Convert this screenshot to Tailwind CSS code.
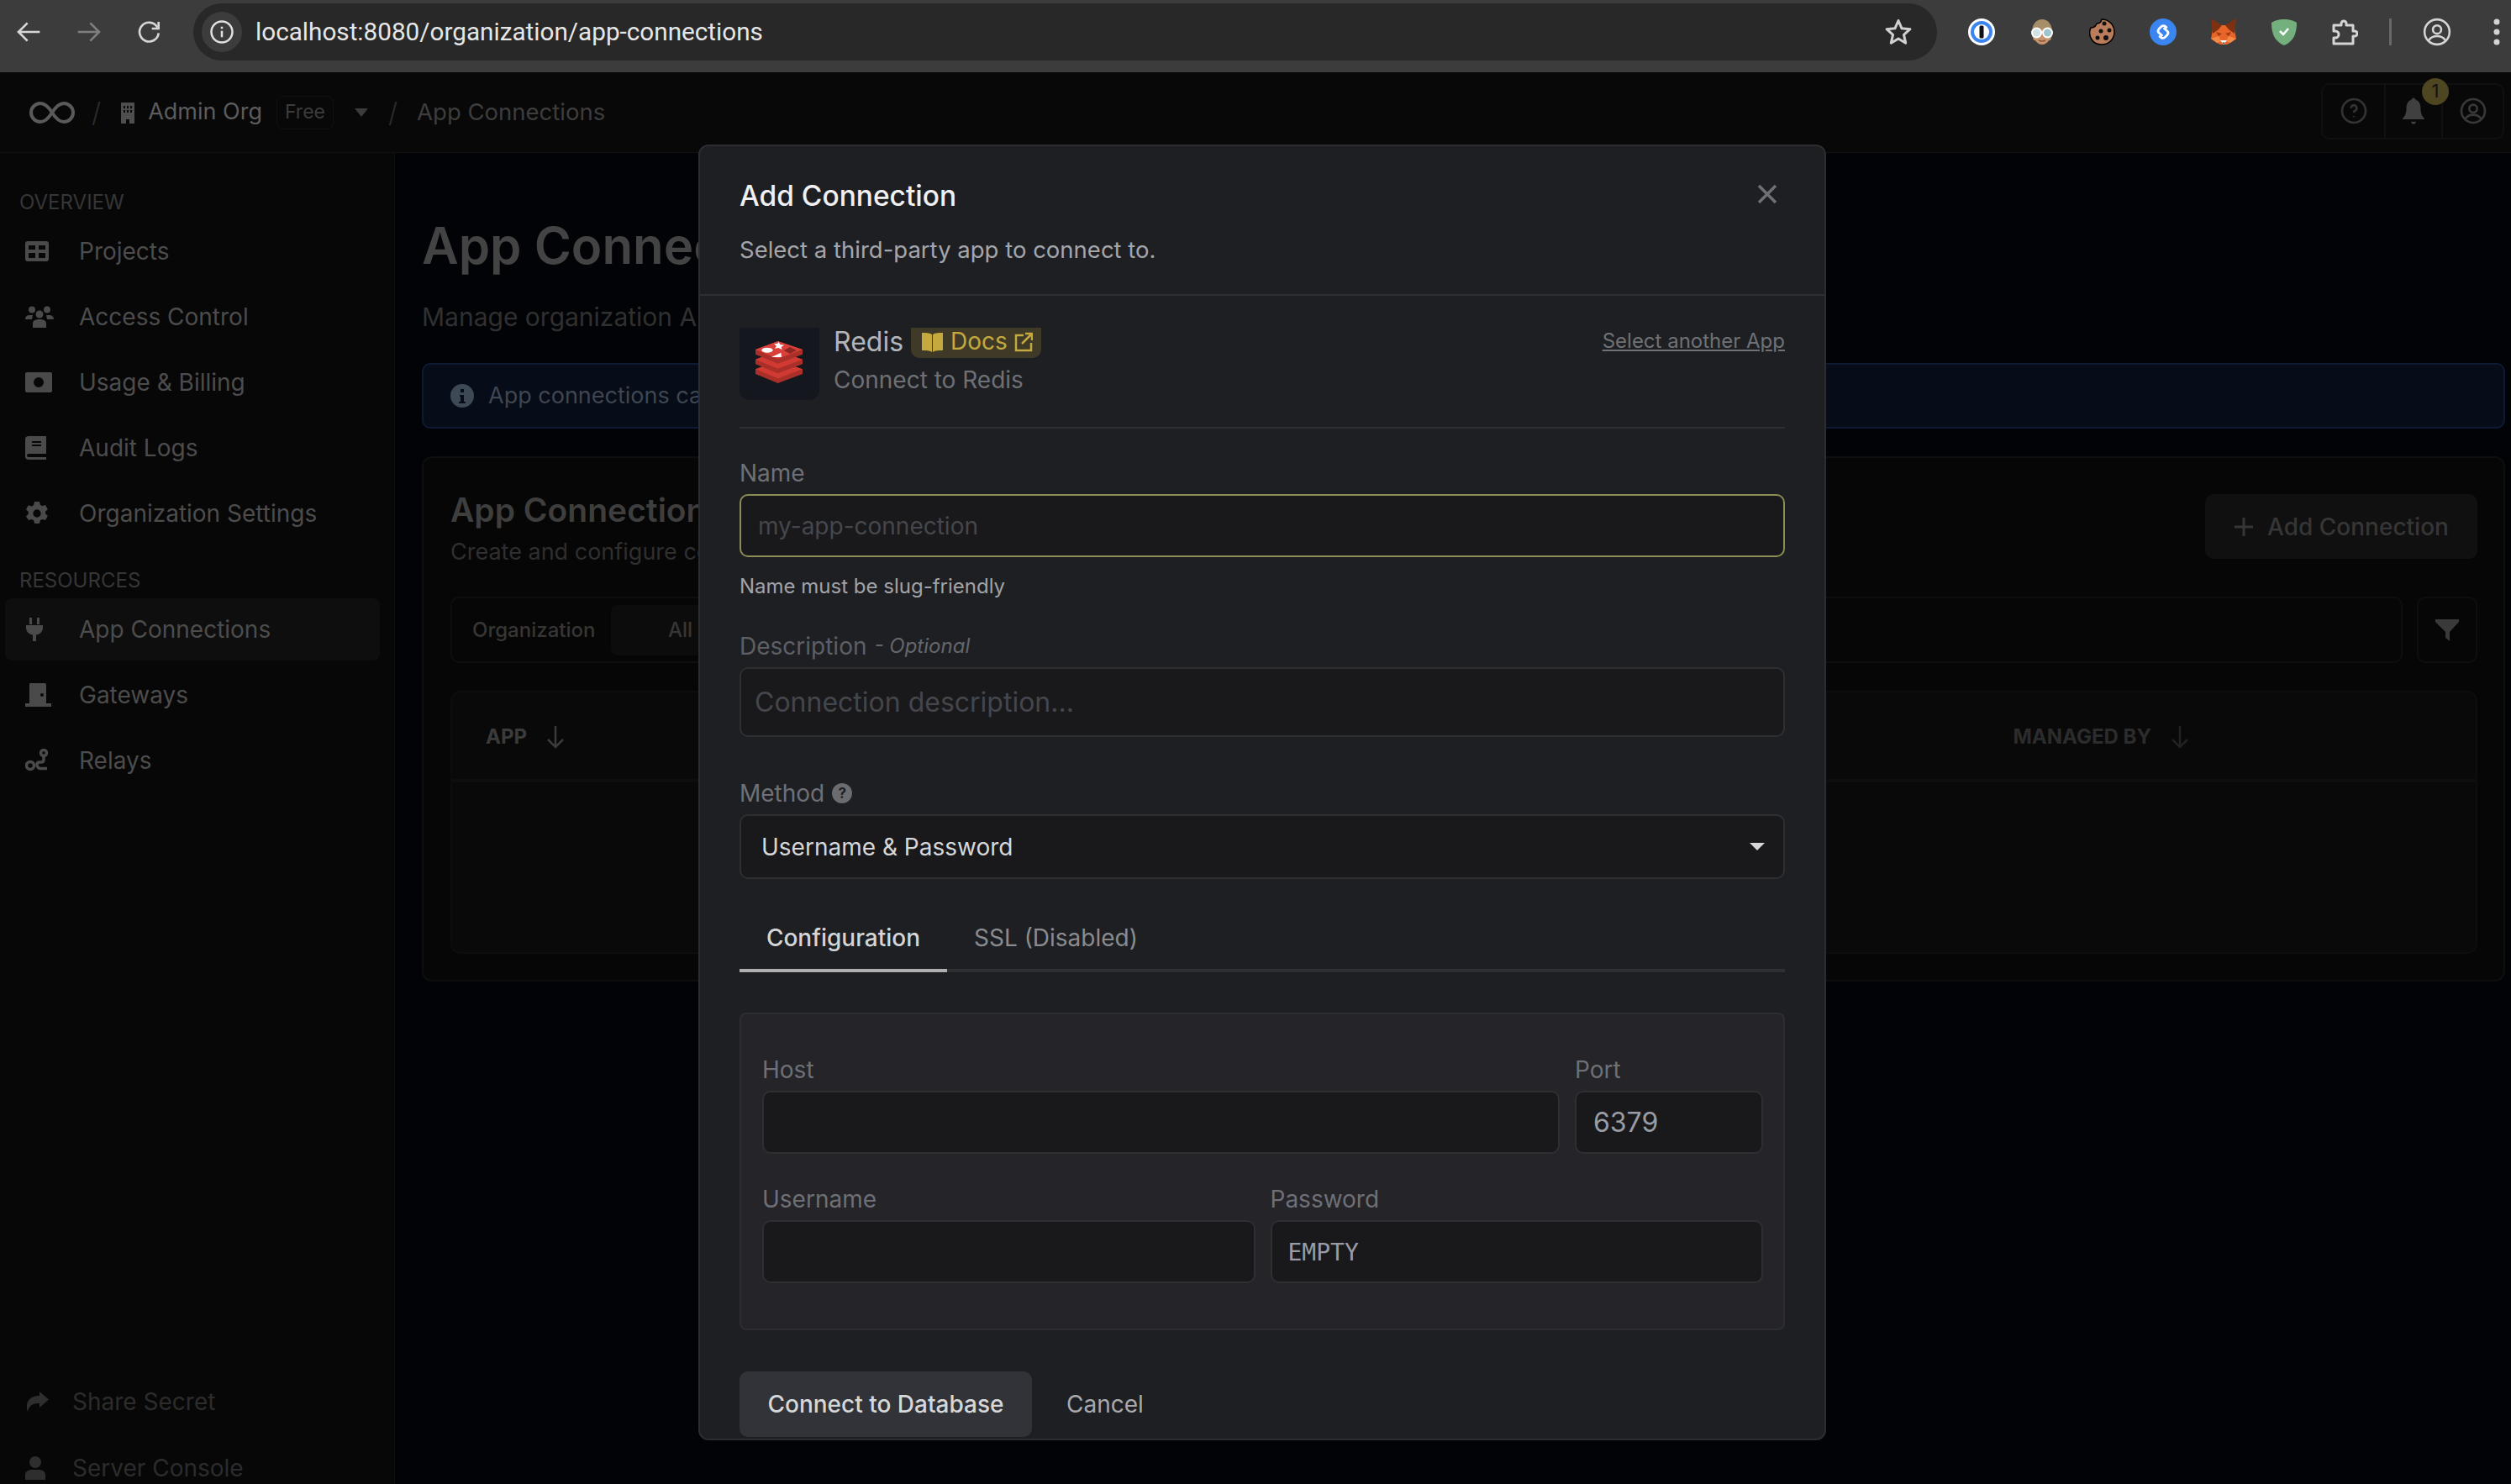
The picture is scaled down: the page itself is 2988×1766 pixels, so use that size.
<!DOCTYPE html>
<html lang="en">
<head>
  <meta charset="UTF-8">
  <title>App Connections</title>
  <script src="https://cdn.jsdelivr.net/npm/@tailwindcss/browser@4"></script>
</head>
<body class="bg-[#020306] [font-family:Inter,sans-serif]">
<div class="relative w-[2988px] h-[1766px] overflow-hidden flex flex-col">

  <!-- browser toolbar -->
  <div class="h-[86px] shrink-0 bg-[#3c3c3c] flex items-center pb-[10px]">
    <div class="w-[230px] shrink-0 flex items-center pl-[18px] gap-[40px]">
      <svg class="w-[32px] h-[32px]" viewBox="0 0 24 24" fill="none" stroke="#d6d6d6" stroke-width="2"><path d="M22 12H3M11 4l-8 8 8 8"/></svg>
      <svg class="w-[32px] h-[32px]" viewBox="0 0 24 24" fill="none" stroke="#7f7f7f" stroke-width="2"><path d="M2 12h19M13 4l8 8-8 8"/></svg>
      <svg class="w-[32px] h-[32px]" viewBox="0 0 24 24" fill="none" stroke="#d6d6d6" stroke-width="2"><path d="M19 8a8.5 8.5 0 1 0 1 5"/><path d="M20 3v6h-6" /></svg>
    </div>
    <div class="w-[2075px] h-[68px] rounded-[34px] bg-[#282828] flex items-center pl-[10px] pr-[28px]">
      <div class="w-[48px] h-[48px] rounded-full bg-[#3c3c3c] flex items-center justify-center">
        <svg class="w-[30px] h-[30px]" viewBox="0 0 24 24" fill="none" stroke="#e0e0e0" stroke-width="2"><circle cx="12" cy="12" r="10"/><path d="M12 11v6M12 7v2"/></svg>
      </div>
      <span class="ml-[16px] text-[29.7px] text-[#e6e6e6] [font-family:Roboto,sans-serif]">localhost:8080/organization/app-connections</span>
      <svg class="ml-auto w-[36px] h-[36px]" viewBox="0 0 24 24" fill="none" stroke="#d0d0d0" stroke-width="2" stroke-linejoin="round"><path d="M12 3l2.7 6.2 6.6.6-5 4.4 1.5 6.6L12 17.3l-5.8 3.5 1.5-6.6-5-4.4 6.6-.6z"/></svg>
    </div>
    <div class="flex-1 flex items-center pl-[37px] gap-[40px]">
      <!-- 1password -->
      <svg class="w-[32px] h-[32px] shrink-0" viewBox="0 0 32 32"><circle cx="16" cy="16" r="16" fill="#fff"/><circle cx="16" cy="16" r="13" fill="#3b85f0"/><circle cx="16" cy="16" r="9" fill="#fff"/><rect x="13.5" y="8.5" width="5" height="15" rx="1.5" fill="#111"/></svg>
      <!-- avatar -->
      <svg class="w-[32px] h-[32px] shrink-0" viewBox="0 0 32 32"><path d="M4 20C3 7 9 1 16 1s13 6 12 19l-2 6H6z" fill="#a68f68"/><path d="M7 13q9 1 18-3v15q-4 6-9 6t-9-6z" fill="#c8946e"/><circle cx="9.500" cy="17" r="5.500" fill="#cfe3e6" stroke="#fff" stroke-width="2"/><circle cx="22.500" cy="17" r="5.500" fill="#9fc5cc" stroke="#fff" stroke-width="2"/><path d="M12 26q4 2 8 0" stroke="#8c5a3c" stroke-width="1.500" fill="none"/></svg>
      <!-- cookie -->
      <svg class="w-[32px] h-[32px] shrink-0" viewBox="0 0 32 32"><path d="M15 1c-1 4-3 5-6 5-1 3-3 5-7 5-2 4-2 9 1 14 3 5 8 6 12 6 9 0 15-7 15-15S24 1 15 1z" fill="#b97d5c" stroke="#000" stroke-width="1.500"/><circle cx="18" cy="6" r="2.500" fill="#111"/><circle cx="24" cy="14" r="2.500" fill="#111"/><circle cx="14" cy="15" r="2.500" fill="#111"/><circle cx="10" cy="23" r="2.500" fill="#111"/><circle cx="20" cy="23" r="3" fill="#111"/></svg>
      <!-- shazam -->
      <svg class="w-[32px] h-[32px] shrink-0" viewBox="0 0 32 32"><circle cx="16" cy="16" r="16" fill="#3b85f0"/><path d="M20 10.500L18 9Q16 8 14 9.500L11 12.500Q9 15 11 17L14.500 20M12 21.500L14 23Q16 24 18 22.500L21 19.500Q23 17 21 15L17.500 12" fill="none" stroke="#fff" stroke-width="2.800" stroke-linecap="round"/></svg>
      <!-- fox -->
      <svg class="w-[32px] h-[32px] shrink-0" viewBox="0 0 32 32"><path d="M3 13L9 8H23L29 13L31 24L24 29L20 31H12L8 29L1 24Z" fill="#e8652a"/><path d="M1 0L14 8L10 13L3 18ZM31 0L18 8L22 13L29 18Z" fill="#7f3010"/><path d="M7 16L14 18L10 21ZM25 16L18 18L22 21Z" fill="#9c3d14"/><path d="M1 24L10 21L13 27L8 29ZM31 24L22 21L19 27L24 29Z" fill="#f28a45"/><path d="M12 26H20L16 31Z" fill="#fff"/><path d="M14.500 28.500H17.500L16 30.500Z" fill="#222"/></svg>
      <!-- adguard -->
      <svg class="w-[32px] h-[32px] shrink-0" viewBox="0 0 32 32"><path d="M16 1C9 1 4 3 1 5c0 12 3 22 15 27C28 27 31 17 31 5 28 3 23 1 16 1z" fill="#74b07e"/><path d="M11 15l4 4 6-7" fill="none" stroke="#fff" stroke-width="2.500"/></svg>
      <!-- puzzle -->
      <svg class="w-[32px] h-[32px] shrink-0" viewBox="0 0 32 32" fill="none" stroke="#d4d4d4" stroke-width="3" stroke-linejoin="round"><path d="M3 8h9V6a3 3 0 0 1 6 0v2h8v7h2a3 3 0 0 1 0 6h-2v9H3v-7h2a4 4 0 0 0 0-8H3z"/></svg>
      <div class="w-[3px] h-[32px] bg-[#686868] -ml-[3px]"></div>
      <svg class="w-[34px] h-[34px] shrink-0 ml-[-3px]" viewBox="0 0 24 24" fill="none" stroke="#d4d4d4" stroke-width="1.800"><circle cx="12" cy="12" r="10.500"/><circle cx="12" cy="10" r="3.500"/><path d="M5 19c2-3 5-3.500 7-3.500s5 .5 7 3.500"/></svg>
      <svg class="w-[8px] h-[32px] shrink-0 ml-[10px]" viewBox="0 0 8 32" fill="#d4d4d4"><circle cx="4" cy="4" r="3.500"/><circle cx="4" cy="16" r="3.500"/><circle cx="4" cy="28" r="3.500"/></svg>
    </div>
  </div>

  <!-- app header -->
  <header class="h-[96px] shrink-0 bg-[#080808] border-b border-[#101010] flex items-center pl-[35px] pr-[8px]">
    <svg class="w-[54px] h-[26px]" viewBox="0 0 54 26" fill="none" stroke="#5a5a5a" stroke-width="4"><path d="M27 13C22 5 18 2 13 2a11 11 0 0 0 0 22c5 0 9-3 14-11s9-11 14-11a11 11 0 0 1 0 22c-5 0-9-3-14-11z"/></svg>
    <span class="ml-[20px] text-[32px] text-[#2c2c2c] font-light">/</span>
    <svg class="ml-[23px] w-[18px] h-[26px]" viewBox="0 0 18 26" fill="#4e4e4e"><path d="M1 1h16v25h-6v-5H7v5H1z"/><path d="M4 5h2v3H4zM8 5h2v3H8zM12 5h2v3h-2zM4 10h2v3H4zM8 10h2v3H8zM12 10h2v3h-2z" fill="#0a0a0a"/></svg>
    <span class="ml-[15px] text-[27px] text-[#5c5c5c]">Admin Org</span>
    <span class="ml-[17px] w-[68px] h-[40px] rounded-[8px] border border-[#111] flex items-center justify-center text-[23px] text-[#3c3c3c]">Free</span>
    <svg class="ml-[25px] w-[16px] h-[10px]" viewBox="0 0 16 10" fill="#3c3c3c"><path d="M0 0h16L8 10z"/></svg>
    <span class="ml-[24px] text-[32px] text-[#2c2c2c] font-light">/</span>
    <span class="ml-[23px] text-[27.5px] text-[#3d3d3d]">App Connections</span>
    <div class="ml-auto w-[218px] h-[67px] mt-[-3px] rounded-[10px] border-2 border-[#101010] flex">
      <div class="w-[73px] flex items-center justify-center">
        <svg class="w-[32px] h-[32px]" viewBox="0 0 24 24" fill="none" stroke="#333" stroke-width="2"><circle cx="12" cy="12" r="10.500"/><path d="M9.500 9.500a2.500 2.500 0 1 1 3.500 2.300c-.7.400-1 1-1 1.700M12 16.500v1"/></svg>
      </div>
      <div class="relative w-[70px] border-x-2 border-[#101010] flex items-center justify-center">
        <svg class="w-[30px] h-[34px]" viewBox="0 0 20 24" fill="#404040"><path d="M10 1c1 0 1.500 .7 1.500 1.500C15 3.500 16 7 16 10c0 4 1 6 3 8v1H1v-1c2-2 3-4 3-8 0-3 1-6.500 4.500-7.500C8.500 1.700 9 1 10 1zM8 21h4a2 2 0 0 1-4 0z"/></svg>
        <span class="absolute left-[43px] top-[-8px] w-[32px] h-[32px] rounded-full bg-[#4e4521] text-[#111] text-[22px] flex items-center justify-center">1</span>
      </div>
      <div class="flex-1 flex items-center justify-center">
        <svg class="w-[32px] h-[32px]" viewBox="0 0 24 24" fill="none" stroke="#383838" stroke-width="2"><circle cx="12" cy="12" r="10.500"/><circle cx="12" cy="10" r="3.500"/><path d="M5 19c2-3 5-3.500 7-3.500s5 .5 7 3.500"/></svg>
      </div>
    </div>
  </header>

  <div class="flex-1 flex min-h-0">
    <!-- sidebar -->
    <aside class="w-[470px] shrink-0 bg-[#070708] border-r border-[#0f0f10] pt-[42px]">
      <div class="h-[34px] pl-[23px] mb-[4px] text-[24px] leading-[34px] text-[#363636]">OVERVIEW</div>
      <div class="flex flex-col gap-[4px] text-[28px] text-[#4c4c4c]">
        <div class="ml-[6px] mr-[17px] h-[74px] flex items-center pl-[24px]">
          <svg class="w-[28px] h-[24px] mr-[36px] shrink-0" viewBox="0 0 28 24" fill="#4a4a4a"><path d="M3 0h22a3 3 0 0 1 3 3v18a3 3 0 0 1-3 3H3a3 3 0 0 1-3-3V3a3 3 0 0 1 3-3zM4 5v5h8V5zm12 0v5h8V5zM4 14v6h8v-6zm12 0v6h8v-6z" fill-rule="evenodd"/></svg>
          Projects
        </div>
        <div class="ml-[6px] mr-[17px] h-[74px] flex items-center pl-[24px]">
          <svg class="w-[34px] h-[26px] mr-[30px] shrink-0" viewBox="0 0 34 26" fill="#4a4a4a"><circle cx="8" cy="4.500" r="4"/><circle cx="26" cy="4.500" r="4"/><circle cx="17" cy="10" r="4.500"/><path d="M0 16c0-4 3-5 6-5h3l-1 5H0zM34 16c0-4-3-5-6-5h-3l1 5h8zM9 26v-5c0-4 4-5 8-5s8 1 8 5v5z"/></svg>
          Access Control
        </div>
        <div class="ml-[6px] mr-[17px] h-[74px] flex items-center pl-[24px]">
          <svg class="w-[32px] h-[24px] mr-[32px] shrink-0" viewBox="0 0 32 24" fill="#4a4a4a" fill-rule="evenodd"><path d="M2 0h28a2 2 0 0 1 2 2v20a2 2 0 0 1-2 2H2a2 2 0 0 1-2-2V2a2 2 0 0 1 2-2zm14 6a6 6 0 1 0 0 12 6 6 0 0 0 0-12z"/></svg>
          Usage &amp; Billing
        </div>
        <div class="ml-[6px] mr-[17px] h-[74px] flex items-center pl-[24px]">
          <svg class="w-[25px] h-[28px] mr-[39px] shrink-0" viewBox="0 0 25 28" fill="#4a4a4a" fill-rule="evenodd"><path d="M4 0h21v21H4a2 2 0 0 0 0 4h21v3H4a4 4 0 0 1-4-4V4a4 4 0 0 1 4-4zm4 6v2h11V6zm0 4v2h11v-2z"/></svg>
          Audit Logs
        </div>
        <div class="ml-[6px] mr-[17px] h-[74px] flex items-center pl-[24px]">
          <svg class="w-[28px] h-[28px] mr-[36px] shrink-0" viewBox="0 0 24 24" fill="#4a4a4a" fill-rule="evenodd"><path d="M9.500 0h5l.8 3.300 2 1.100 3.200-1 2.500 4.300-2.400 2.300v2.300l2.400 2.300-2.500 4.300-3.200-1-2 1.100-.8 3.300h-5l-.8-3.300-2-1.100-3.200 1L.8 14.900l2.400-2.300v-2.300L.8 8l2.500-4.300 3.200 1 2-1.100zM12 8a4 4 0 1 0 0 8 4 4 0 0 0 0-8z"/></svg>
          Organization Settings
        </div>
      </div>
      <div class="h-[34px] mt-[26px] pl-[23px] mb-[4px] text-[24px] leading-[34px] text-[#363636]">RESOURCES</div>
      <div class="flex flex-col gap-[4px] text-[28px] text-[#4c4c4c]">
        <div class="ml-[6px] mr-[17px] h-[74px] flex items-center pl-[24px] rounded-[8px] bg-[#0e0e0e]">
          <svg class="w-[22px] h-[28px] mr-[42px] shrink-0" viewBox="0 0 22 28" fill="#4a4a4a"><path d="M5 0h3v8H5zM14 0h3v8h-3zM1 9h20v3c0 5-4 8-8 8.500V28H9v-7.500C5 20 1 17 1 12z"/></svg>
          App Connections
        </div>
        <div class="ml-[6px] mr-[17px] h-[74px] flex items-center pl-[24px]">
          <svg class="w-[32px] h-[28px] mr-[32px] shrink-0" viewBox="0 0 32 28" fill="#4a4a4a" fill-rule="evenodd"><path d="M5 1a1 1 0 0 1 1-1h17a2 2 0 0 1 2 2v22h6v4H0v-4h5zm15 11a2 2 0 1 0 0 4 2 2 0 0 0 0-4z"/></svg>
          Gateways
        </div>
        <div class="ml-[6px] mr-[17px] h-[74px] flex items-center pl-[24px]">
          <svg class="w-[28px] h-[28px] mr-[36px] shrink-0" viewBox="0 0 28 28" fill="none" stroke="#4a4a4a" stroke-width="3.500"><circle cx="22" cy="5" r="3.500"/><circle cx="6" cy="20" r="4.500"/><path d="M22 9v4q0 3-3 3h-2q-3 0-3 3t3 4.500h9"/></svg>
          Relays
        </div>
      </div>
      <div class="mt-[689px] flex flex-col gap-[5px] text-[28px] text-[#2c2c2c]">
        <div class="ml-[6px] mr-[17px] h-[74px] flex items-center pl-[24px]">
          <svg class="w-[28px] h-[24px] mr-[28px] shrink-0" viewBox="0 0 28 24" fill="#2e2e2e"><path d="M17 0l11 9.500L17 19v-5C9 14 5 16 3 24 0 15 3 5 17 5z"/></svg>
          Share Secret
        </div>
        <div class="ml-[6px] mr-[17px] h-[74px] flex items-center pl-[24px]">
          <svg class="w-[24px] h-[28px] mr-[32px] shrink-0" viewBox="0 0 24 28" fill="#2e2e2e"><circle cx="12" cy="7" r="7"/><path d="M0 28v-6c0-4 4-6 8-6h8c4 0 8 2 8 6v6z"/></svg>
          Server Console
        </div>
      </div>
    </aside>

    <!-- page behind the dialog -->
    <main class="flex-1 pl-[32px] pr-[7px] pt-[74px] min-w-0">
      <h1 class="h-[72px] text-[60px] leading-[72px] font-semibold text-[#434343]">App Connections</h1>
      <p class="h-[48px] mt-[25px] text-[30px] leading-[48px] text-[#303030]">Manage organization App Connections</p>
      <div class="mt-[31px] h-[78px] rounded-[10px] border-2 border-[#0e1a33] bg-[#060c18] flex items-center pl-[32px]">
        <svg class="w-[28px] h-[28px]" viewBox="0 0 28 28" fill="#3d4a56" fill-rule="evenodd"><path d="M14 0a14 14 0 1 0 0 28 14 14 0 0 0 0-28zm-2 6h4v4h-4zm-1 7h5v8h2v2h-8v-2h2v-6h-1z"/></svg>
        <span class="ml-[17px] text-[27px] text-[#3f4650]">App connections can be used across your organization</span>
      </div>
      <section class="mt-[33px] h-[625px] rounded-[12px] border-2 border-[#0e0e0e] bg-[#060606] pl-[32px] pr-[31px] pt-[38px]">
        <div class="flex items-start justify-between">
          <div>
            <h2 class="h-[48px] text-[39px] leading-[48px] font-semibold text-[#3e3e3e]">App Connections</h2>
            <p class="h-[40px] mt-[6px] text-[27px] leading-[40px] text-[#2f2f2f]">Create and configure connections</p>
          </div>
          <button class="mt-[5px] w-[324px] h-[77px] rounded-[10px] bg-[#101011] flex items-center justify-center gap-[16px] text-[28px] font-medium text-[#363636]">
            <svg class="w-[24px] h-[24px]" viewBox="0 0 24 24" fill="none" stroke="#363636" stroke-width="3"><path d="M12 1v22M1 12h22"/></svg>
            Add Connection
          </button>
        </div>
        <div class="mt-[33px] flex gap-[17px]">
          <div class="flex-1 h-[79px] rounded-[10px] border-2 border-[#0e0e0e] flex items-center pl-[24px] text-[24px] font-medium">
            <span class="w-[165px] text-[#363636]">Organization</span>
            <span class="w-[200px] h-[60px] rounded-[8px] bg-[#0c0c0c] flex items-center pl-[68px] text-[#363636]">All</span>
          </div>
          <div class="w-[72px] h-[79px] rounded-[10px] border-2 border-[#0e0e0e] flex items-center justify-center">
            <svg class="w-[28px] h-[26px]" viewBox="0 0 28 26" fill="#3a3a3a"><path d="M0 0h28v3L17 15v11l-5-4v-7L0 3z"/></svg>
          </div>
        </div>
        <div class="mt-[33px] h-[313px] rounded-[12px] border-2 border-[#0d0d0d] bg-[#090909]">
          <div class="h-[107px] border-b-4 border-[#0e0e0e] flex items-center pl-[40px] pr-[340px] pt-[2px] text-[24px] font-bold">
            <span class="text-[#3b3b3b]">APP</span>
            <svg class="ml-[22px] w-[24px] h-[28px]" viewBox="0 0 24 28" fill="none" stroke="#3b3b3b" stroke-width="2.500"><path d="M12 1v25M3 17l9 9 9-9"/></svg>
            <span class="ml-auto text-[#2c2c2c]">MANAGED BY</span>
            <svg class="ml-[22px] w-[24px] h-[28px]" viewBox="0 0 24 28" fill="none" stroke="#222" stroke-width="2.500"><path d="M12 1v25M3 17l9 9 9-9"/></svg>
          </div>
        </div>
      </section>
    </main>
  </div>

  <!-- dialog -->
  <div class="absolute left-[831px] top-[172px] w-[1342px] h-[1542px] overflow-hidden rounded-[12px] border-2 border-[#2c2d31] bg-[#1e1f23]">
    <div class="relative border-b-2 border-[#2e2f33] px-[47px] pt-[37px] pb-[33px]">
      <h2 class="h-[44px] text-[33.5px] leading-[44px] font-medium text-[#f0f0f2]">Add Connection</h2>
      <p class="h-[40px] mt-[22px] text-[27.5px] leading-[40px] text-[#a4a6ac]">Select a third-party app to connect to.</p>
      <svg class="absolute right-[56px] top-[45px] w-[24px] h-[24px]" viewBox="0 0 24 24" fill="none" stroke="#6f7074" stroke-width="3.500"><path d="M2 2l20 20M22 2L2 22"/></svg>
    </div>
    <div class="px-[47px]">
      <div class="mt-[38px] h-[120px] border-b-2 border-[#2e2f33] flex items-start">
        <div class="w-[95px] h-[86px] rounded-b-[12px] bg-[#15171f] flex items-center justify-center">
          <svg class="w-[90px] h-[85px] ml-[2px]" viewBox="0 0 270 255">
            <path d="M45 145v17l80 33 88-33v-17l-88-30z" fill="#a92f28"/><path d="M45 145l80-30 88 30-88 33z" fill="#d03a32"/>
            <path d="M45 110v17l80 33 88-33v-17l-88-30z" fill="#a92f28"/><path d="M45 110l80-30 88 30-88 33z" fill="#d03a32"/>
            <path d="M45 75v17l80 33 88-33V75l-88-30z" fill="#a92f28"/><path d="M45 75l80-30 88 30-88 33z" fill="#d9403a"/>
            <path d="M127 47l6 10 14 2-10 7 3 9-13-6-13 2 6-9-9-7 13-1z" fill="#fff"/>
            <ellipse cx="87" cy="77" rx="20" ry="9" fill="#fff"/>
            <path d="M102 102l34-16 2 16z" fill="#fff"/>
            <path d="M168 66l24 12-24 12-22-12z" fill="#8c2620"/>
          </svg>
        </div>
        <div class="ml-[17px] flex-1">
          <div class="flex items-start">
            <span class="mt-[-3px] text-[32px] leading-[40px] text-[#b4b5b8]">Redis</span>
            <span class="ml-[9px] w-[155px] h-[36px] rounded-b-[10px] bg-[#3e3a27] flex items-center pl-[12px] pb-[3px] text-[28px] leading-[33px] text-[#c4a93e]">
              <svg class="w-[27px] h-[24px] mr-[8px] shrink-0" viewBox="0 0 27 24" fill="#c4a93e"><path d="M1 1c5 0 9 0 12 2v21c-3-2-7-2-12-2zM26 1c-5 0-9 0-12 2v21c3-2 7-2 12-2z"/></svg>
              Docs
              <svg class="w-[22px] h-[24px] ml-[8px] shrink-0" viewBox="0 0 22 24" fill="none" stroke="#c4a93e" stroke-width="2.500"><path d="M11 4H2v18h18v-9M9 14L21 2M13 2h8v8"/></svg>
            </span>
            <a class="ml-auto mt-[1px] text-[24px] leading-[30px] text-[#6f7175] underline">Select another App</a>
          </div>
          <div class="mt-[5px] h-[40px] text-[28px] leading-[40px] text-[#6e7076]">Connect to Redis</div>
        </div>
      </div>

      <label class="block mt-[33px] h-[40px] text-[28px] leading-[40px] text-[#6e7076]">Name</label>
      <input class="block mt-[5px] w-full h-[75px] rounded-[10px] border-2 border-[#8c8c55] bg-[#19191b] pl-[20px] text-[28px] placeholder:text-[#45474d]" placeholder="my-app-connection">
      <p class="mt-[19px] h-[32px] text-[24px] leading-[32px] text-[#a2a3a7]">Name must be slug-friendly</p>

      <label class="flex items-center mt-[35px] h-[40px] text-[28px] leading-[40px] text-[#5d5f65]">Description<em class="ml-[9px] text-[24px] text-[#64666c]">- Optional</em></label>
      <input class="block mt-[5px] w-full h-[83px] rounded-[10px] border-2 border-[#2e2f33] bg-[#19191b] pl-[16px] text-[32px] placeholder:text-[#44464c]" placeholder="Connection description...">

      <label class="flex items-center mt-[47px] h-[40px] text-[28px] leading-[40px] text-[#6e7076]">Method
        <span class="ml-[9px] w-[24px] h-[24px] rounded-full bg-[#6a6c72] flex items-center justify-center text-[17px] font-bold text-[#1e1f23]">?</span>
      </label>
      <div class="mt-[5px] h-[77px] rounded-[10px] border-2 border-[#2e2f33] bg-[#19191b] flex items-center pl-[24px] pr-[22px] text-[28px] text-[#d6d7d9]">
        Username &amp; Password
        <svg class="ml-auto w-[18px] h-[9px]" viewBox="0 0 16 8" fill="#d6d7d9"><path d="M0 0h16L8 8z"/></svg>
      </div>

      <div class="mt-[32px] h-[79px] border-b-4 border-[#2f3034] flex text-[28px]">
        <div class="w-[247px] h-[79px] border-b-4 border-[#b0b0b0] flex items-center justify-center font-medium text-[#d4d5d7]">Configuration</div>
        <div class="ml-[32px] h-[75px] flex items-center text-[#8a8b8f]">SSL (Disabled)</div>
      </div>

      <div class="mt-[48px] h-[378px] rounded-[8px] border-2 border-[#2d2e33] bg-[#242429] pl-[25px] pr-[24px] pt-[46px]">
        <div class="flex gap-[18px]">
          <div class="flex-1">
            <label class="block h-[40px] text-[28px] leading-[40px] text-[#6e7076]">Host</label>
            <input class="block mt-[5px] w-full h-[75px] rounded-[10px] border-2 border-[#2e2f33] bg-[#19191b]">
          </div>
          <div class="w-[224px]">
            <label class="block h-[40px] text-[28px] leading-[40px] text-[#6e7076]">Port</label>
            <input class="block mt-[5px] w-full h-[75px] rounded-[10px] border-2 border-[#2e2f33] bg-[#19191b] pl-[20px] text-[32px] text-[#9a9ca5]" value="6379">
          </div>
        </div>
        <div class="mt-[34px] grid grid-cols-2 gap-[18px]">
          <div>
            <label class="block h-[40px] text-[28px] leading-[40px] text-[#6e7076]">Username</label>
            <input class="block mt-[5px] w-full h-[75px] rounded-[10px] border-2 border-[#2e2f33] bg-[#19191b]">
          </div>
          <div>
            <label class="block h-[40px] text-[28px] leading-[40px] text-[#6e7076]">Password</label>
            <input class="block mt-[5px] w-full h-[75px] rounded-[10px] border-2 border-[#2e2f33] bg-[#19191b] pl-[19px] pt-[2px] text-[28px] text-[#9a9ca5] [font-family:'DejaVu_Sans_Mono',monospace]" value="EMPTY">
          </div>
        </div>
      </div>

      <div class="mt-[49px] flex items-center">
        <button class="w-[348px] h-[78px] rounded-[10px] bg-[#313338] text-[28px] font-medium text-[#d6d7d9]">Connect to Database</button>
        <button class="ml-[41px] text-[28px] text-[#a8a9ac]">Cancel</button>
      </div>
    </div>
  </div>
</div>
</body>
</html>
